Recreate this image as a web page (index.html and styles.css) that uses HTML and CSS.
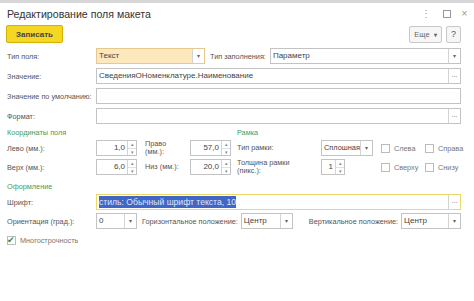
FILE: index.html
```html
<!DOCTYPE html>
<html lang="ru">
<head>
    <meta charset="UTF-8">
    <title>Редактирование поля макета</title>
    <link rel="stylesheet" href="styles.css">
</head>
<body>
    <div class="topline"></div>
    <div class="window">
        <div class="head">
            <h1>Редактирование поля макета</h1>
            <div class="wbtns">
                <span class="wb menu">&#8942;</span>
                <span class="wb"><i class="sq"></i></span>
                <span class="wb x">&#215;</span>
            </div>
        </div>
        <div class="toolbar">
            <button class="save">Записать</button>
            <div class="tools">
                <button class="btn more">Еще <b>&#9662;</b></button>
                <button class="btn help">?</button>
            </div>
        </div>

        <div class="row">
            <label class="lbl">Тип поля:</label>
            <div class="field sel typ"><span class="val">Текст</span><span class="dd">&#9662;</span></div>
            <label class="lbl2">Тип заполнения:</label>
            <div class="field sel grow"><span class="val">Параметр</span><span class="dd">&#9662;</span></div>
        </div>
        <div class="row">
            <label class="lbl">Значение:</label>
            <div class="field grow"><span class="val">СведенияОНоменклатуре.Наименование</span><span class="dots">...</span></div>
        </div>
        <div class="row">
            <label class="lbl">Значение по умолчанию:</label>
            <div class="field grow"><span class="val"></span></div>
        </div>
        <div class="row">
            <label class="lbl">Формат:</label>
            <div class="field grow"><span class="val"></span><span class="dots">...</span></div>
        </div>

        <div class="groups">
            <div class="coords">
                <div class="group">Координаты поля</div>
                <div class="crow">
                    <label class="lbl">Лево (мм.):</label>
                    <div class="field spin"><span class="num">1,0</span><span class="arr"><i>&#9652;</i><i>&#9662;</i></span></div>
                    <label class="lbl3">Право<br>(мм.):</label>
                    <div class="field spin"><span class="num">57,0</span><span class="arr"><i>&#9652;</i><i>&#9662;</i></span></div>
                </div>
                <div class="crow">
                    <label class="lbl">Верх (мм.):</label>
                    <div class="field spin"><span class="num">6,0</span><span class="arr"><i>&#9652;</i><i>&#9662;</i></span></div>
                    <label class="lbl3">Низ (мм.):</label>
                    <div class="field spin"><span class="num">20,0</span><span class="arr"><i>&#9652;</i><i>&#9662;</i></span></div>
                </div>
            </div>
            <div class="frame">
                <div class="group">Рамка</div>
                <div class="crow">
                    <label class="lbl4">Тип рамки:</label>
                    <div class="ctl"><div class="field sel ftype"><span class="val">Сплошная</span><span class="dd">&#9662;</span></div></div>
                    <label class="chk"><i class="box"></i>Слева</label>
                    <label class="chk"><i class="box"></i>Справа</label>
                </div>
                <div class="crow">
                    <label class="lbl4">Толщина рамки<br>(пикс.):</label>
                    <div class="ctl"><div class="field spin small"><span class="num">1</span><span class="arr"><i>&#9652;</i><i>&#9662;</i></span></div></div>
                    <label class="chk"><i class="box"></i>Сверху</label>
                    <label class="chk"><i class="box"></i>Снизу</label>
                </div>
            </div>
        </div>

        <div class="group design">Оформление</div>
        <div class="row tight">
            <label class="lbl">Шрифт:</label>
            <div class="field grow focus"><span class="val"><span class="hl">стиль: Обычный шрифт текста, 10</span></span><span class="dots">...</span></div>
        </div>
        <div class="row tight">
            <label class="lbl">Ориентация (град.):</label>
            <div class="field sel orient"><span class="val">0</span><span class="dd">&#9662;</span></div>
            <label class="lbl5">Горизонтальное положение:</label>
            <div class="field sel hpos"><span class="val">Центр</span><span class="dd">&#9662;</span></div>
            <label class="lbl5 vert">Вертикальное положение:</label>
            <div class="field sel grow"><span class="val">Центр</span><span class="dd">&#9662;</span></div>
        </div>
        <div class="row">
            <label class="chk multi"><i class="box on">&#10004;</i>Многострочность</label>
        </div>
    </div>
</body>
</html>
```
FILE: styles.css
```css
body { margin: 0; background: #fff; font-family: "Liberation Sans", Arial, sans-serif; color: #555; }
.topline { height: 3px; background: #d6d6d6; }
.window { padding: 0 13px 0 7px; }
button { font-family: inherit; cursor: pointer; }

.head { display: flex; align-items: center; justify-content: space-between; height: 21px; }
.head h1 { margin: 0; font-size: 10.6px; font-weight: normal; color: #333; }
.wbtns { display: flex; gap: 7px; margin-right: -9px; color: #999; font-size: 10px; }
.wb { width: 11px; text-align: center; }
.wb.menu { margin-right: 3px; }
.sq { display: inline-block; width: 6px; height: 6px; border: 1px solid #999; vertical-align: middle; }

.toolbar { display: flex; align-items: center; justify-content: space-between; height: 20px; margin-bottom: 4px; }
.save { height: 18px; width: 57px; padding: 0; margin-left: -1px; background: #f4d722; border: 1px solid #d4b100; border-radius: 2px; font-size: 8px; font-weight: bold; color: #444; }
.tools { display: flex; gap: 4px; }
.btn { height: 17px; background: #f6f6f6; border: 1px solid #c8c8c8; border-radius: 2px; font-size: 7.5px; color: #666; padding: 0; }
.more { width: 33px; }
.btn b { font-size: 6px; margin-left: 2px; }
.help { width: 15px; font-size: 9px; color: #555; }

.row { display: flex; align-items: center; height: 16px; margin-bottom: 4px; font-size: 7.3px; }
.row.tight { margin-bottom: 3px; }
.lbl { width: 89px; flex: none; white-space: nowrap; }
.lbl2 { margin: 0 4px 0 5px; }
.lbl5 { margin: 0 3px 0 5px; white-space: nowrap; }
.lbl5.vert { margin-left: 16px; }

.field { display: flex; align-items: stretch; height: 16px; box-sizing: border-box; border: 1px solid #c3c3c3; background: #fff; font-size: 8px; color: #444; }
.field .val { flex: 1; padding: 0 2px; line-height: 14px; white-space: nowrap; overflow: hidden; }
.grow { flex: 1; }
.dd, .dots { width: 11px; flex: none; border-left: 1px solid #d4d4d4; text-align: center; font-size: 6px; line-height: 14px; color: #666; }
.dots { font-size: 7px; line-height: 12px; }
.typ { width: 109px; background: #fde7bd; border-color: #e6c98e; }
.typ .dd { background: #fff; }
.focus { border-color: #ecd96a; }
.hl { background: #4266c4; color: #dfe6ff; padding: 1px 0; font-size: 8.6px; }
.orient { width: 41px; }
.hpos { width: 52px; }

.groups { display: flex; }
.coords { width: 230px; flex: none; }
.frame { flex: 1; min-width: 0; }
.group { height: 11px; line-height: 9px; font-size: 7.3px; color: #40a060; margin-bottom: 1px; }
.group.design { margin-top: 3px; line-height: 11px; margin-bottom: 2px; }
.crow { display: flex; align-items: center; height: 16px; margin-bottom: 3px; font-size: 7.3px; }
.lbl3 { width: 53px; padding-left: 8px; box-sizing: border-box; line-height: 8px; }
.lbl4 { width: 84px; flex: none; line-height: 8px; }
.spin { width: 41px; }
.spin.small { width: 24px; }
.num { flex: 1; text-align: right; padding-right: 2px; line-height: 14px; }
.arr { width: 8px; border-left: 1px solid #d4d4d4; display: flex; flex-direction: column; }
.arr i { flex: 1; font-style: normal; font-size: 5px; line-height: 7px; text-align: center; color: #888; }
.arr i + i { border-top: 1px solid #e0e0e0; }
.ctl { width: 60px; flex: none; }
.ftype { width: 52px; }
.ftype .val { font-size: 7.4px; padding: 0 1px 0 2px; }
.chk { display: flex; align-items: center; gap: 4px; width: 44px; flex: none; color: #777; white-space: nowrap; }
.chk + .chk { width: auto; }
.box { width: 9px; height: 9px; flex: none; box-sizing: border-box; border: 1px solid #bbb; background: #fff; font-style: normal; }
.multi { width: auto; }
.box.on { font-size: 9px; line-height: 7px; color: #3a8f3a; text-indent: -1px; }
```
